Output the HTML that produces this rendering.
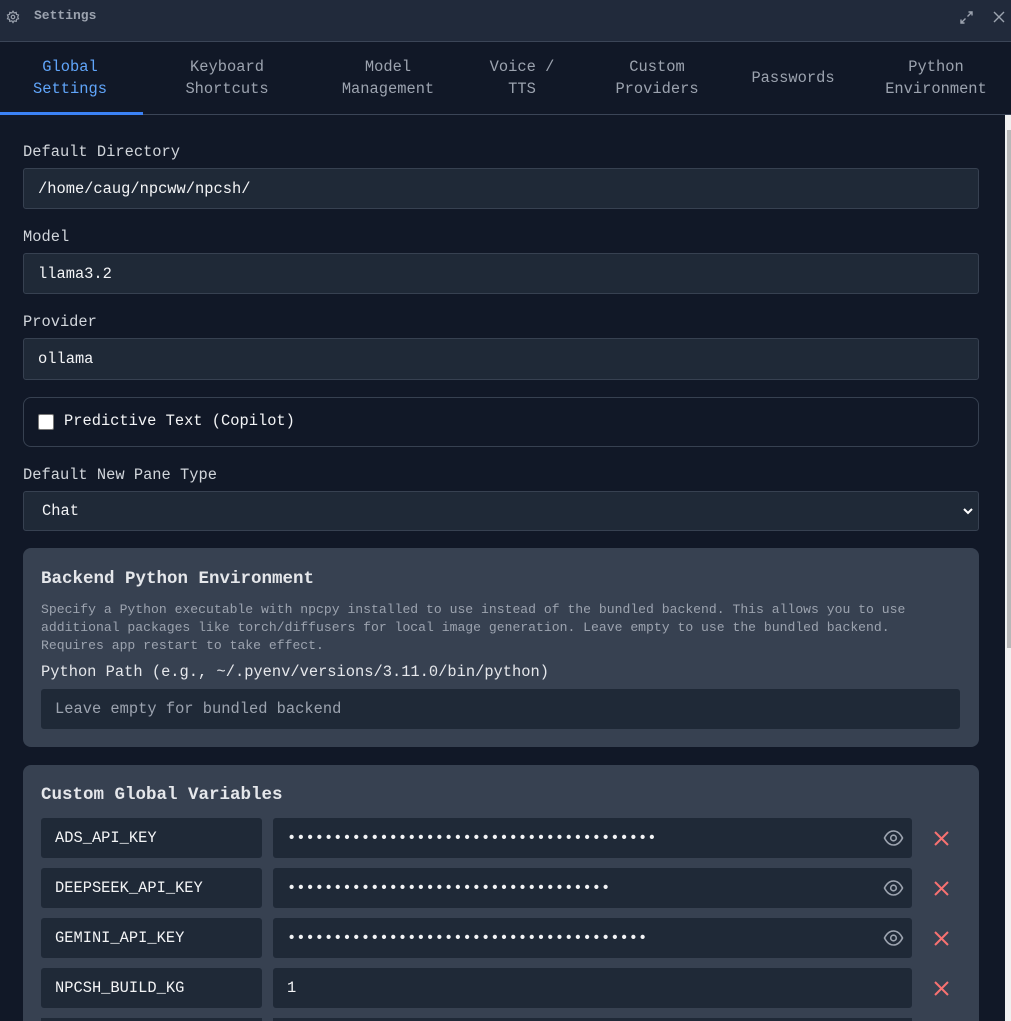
<!DOCTYPE html>
<html style="overflow:hidden;width:1011px;height:1021px"><head><style>
*{box-sizing:border-box;margin:0;padding:0}
body{width:1011px;height:1021px;overflow:hidden;background:#111827;font-family:"Liberation Mono",monospace;color:#e5e7eb;position:relative}
.a{position:absolute}
.tb{left:0;top:0;width:1011px;height:42px;background:#212a3b;border-bottom:1px solid #3b4557}
.tabs{left:0;top:42px;width:1011px;height:73px;border-bottom:1px solid #3b4557}
.tab{position:absolute;top:0;height:72px;display:flex;align-items:center;justify-content:center;text-align:center;font-size:15.4px;line-height:22px;color:#9ca3af}
.lbl{font-size:15.4px;color:#d1d5db}
.inp{background:#1f2937;border:1px solid #374151;border-radius:3px;font-size:15.4px;color:#f3f4f6;padding-left:14px;display:flex;align-items:center}
.panel{background:#374151;border-radius:8px}
.kin{background:#1f2937;border-radius:3px;font-size:15.4px;color:#f3f4f6;padding-left:14px;display:flex;align-items:center;height:40px}
</style></head><body>
<div class="a tb">
<svg class="a" style="left:6px;top:10px" width="14" height="14" viewBox="0 0 24 24" fill="none" stroke="#9ca3af" stroke-width="2"><circle cx="12" cy="12" r="3"/><path d="M12 2l2 3 3.5-1 .5 3.5 3.5 1-1.5 3.5 1.5 3-3.5 1-.5 3.5-3.5-1-2 3-2-3-3.5 1-.5-3.5-3.5-1 1.5-3-1.5-3.5 3.5-1 .5-3.5 3.5 1z"/></svg>
<div class="a" style="left:34px;top:8px;font-size:13px;font-weight:bold;color:#9ca3af">Settings</div>
<svg class="a" style="left:959px;top:10px" width="15" height="15" viewBox="0 0 15 15" stroke="#9ca3af" stroke-width="1.4" fill="none"><path d="M8.5 6.5L13 2M9.5 2H13V5.5M6.5 8.5L2 13M2 9.5V13H5.5"/></svg>
<svg class="a" style="left:993px;top:11px" width="12" height="12" viewBox="0 0 12 12" stroke="#9ca3af" stroke-width="1.4"><path d="M1 1L11 11M11 1L1 11"/></svg>
</div>
<div class="a tabs">
<div class="tab" style="left:0;width:140px;color:#60a5fa">Global<br>Settings</div>
<div class="a" style="left:0;top:70px;width:143px;height:3px;background:#3b82f6"></div>
<div class="tab" style="left:160px;width:134px">Keyboard<br>Shortcuts</div>
<div class="tab" style="left:330px;width:116px">Model<br>Management</div>
<div class="tab" style="left:478px;width:88px">Voice /<br>TTS</div>
<div class="tab" style="left:604px;width:106px">Custom<br>Providers</div>
<div class="tab" style="left:740px;width:106px">Passwords</div>
<div class="tab" style="left:876px;width:120px">Python<br>Environment</div>
</div>

<div class="a lbl" style="left:23px;top:143px">Default Directory</div>
<div class="a inp" style="left:23px;top:168px;width:956px;height:41px">/home/caug/npcww/npcsh/</div>
<div class="a lbl" style="left:23px;top:228px">Model</div>
<div class="a inp" style="left:23px;top:253px;width:956px;height:41px">llama3.2</div>
<div class="a lbl" style="left:23px;top:313px">Provider</div>
<div class="a inp" style="left:23px;top:338px;width:956px;height:42px">ollama</div>
<div class="a" style="left:23px;top:397px;width:956px;height:50px;border:1px solid #374151;border-radius:8px"></div>
<div class="a" style="left:38px;top:414px;width:16px;height:16px;background:#fff;border:1px solid #777;border-radius:2px"></div>
<div class="a lbl" style="left:64px;top:412px;color:#f3f4f6">Predictive Text (Copilot)</div>
<div class="a lbl" style="left:23px;top:466px">Default New Pane Type</div>
<div class="a inp" style="left:23px;top:491px;width:956px;height:40px;padding-left:18px">Chat</div>
<svg class="a" style="left:962px;top:506px" width="12" height="10" viewBox="0 0 12 10"><path d="M2 3l4 4 4-4" stroke="#fff" stroke-width="2" fill="none"/></svg>

<div class="a panel" style="left:23px;top:548px;width:956px;height:199px"></div>
<div class="a" style="left:41px;top:569px;font-size:17.5px;font-weight:bold;color:#e5e7eb">Backend Python Environment</div>
<div class="a" style="left:41px;top:601px;width:910px;font-size:13.1px;line-height:18px;color:#9ca3af">Specify a Python executable with npcpy installed to use instead of the bundled backend. This allows you to use additional packages like torch/diffusers for local image generation. Leave empty to use the bundled backend. Requires app restart to take effect.</div>
<div class="a lbl" style="left:41px;top:663px;color:#e5e7eb">Python Path (e.g., ~/.pyenv/versions/3.11.0/bin/python)</div>
<div class="a kin" style="left:41px;top:689px;width:919px;color:#9ca3af">Leave empty for bundled backend</div>

<div class="a panel" style="left:23px;top:765px;width:956px;height:270px"></div>
<div class="a" style="left:41px;top:785px;font-size:17.5px;font-weight:bold;color:#e5e7eb">Custom Global Variables</div>

<div class="a kin" style="left:41px;top:818px;width:221px">ADS_API_KEY</div>
<div class="a kin" style="left:273px;top:818px;width:639px">••••••••••••••••••••••••••••••••••••••••</div>
<div class="a kin" style="left:41px;top:868px;width:221px">DEEPSEEK_API_KEY</div>
<div class="a kin" style="left:273px;top:868px;width:639px">•••••••••••••••••••••••••••••••••••</div>
<div class="a kin" style="left:41px;top:918px;width:221px">GEMINI_API_KEY</div>
<div class="a kin" style="left:273px;top:918px;width:639px">•••••••••••••••••••••••••••••••••••••••</div>
<div class="a kin" style="left:41px;top:968px;width:221px">NPCSH_BUILD_KG</div>
<div class="a kin" style="left:273px;top:968px;width:639px">1</div>
<div class="a" style="left:41px;top:1018px;width:221px;height:3px;background:#1f2937"></div>
<div class="a" style="left:273px;top:1018px;width:639px;height:3px;background:#1f2937"></div>

<svg class="a" style="left:883px;top:828px" width="21" height="120" viewBox="0 0 21 120" fill="none" stroke="#9ca3af" stroke-width="1.6">
<path d="M1.5 10C4 5 7 3 10.5 3S17 5 19.5 10C17 15 14 17 10.5 17S4 15 1.5 10Z"/><circle cx="10.5" cy="10" r="2.8"/>
<g transform="translate(0,50)"><path d="M1.5 10C4 5 7 3 10.5 3S17 5 19.5 10C17 15 14 17 10.5 17S4 15 1.5 10Z"/><circle cx="10.5" cy="10" r="2.8"/></g>
<g transform="translate(0,100)"><path d="M1.5 10C4 5 7 3 10.5 3S17 5 19.5 10C17 15 14 17 10.5 17S4 15 1.5 10Z"/><circle cx="10.5" cy="10" r="2.8"/></g>
</svg>
<svg class="a" style="left:934px;top:831px" width="15" height="165" viewBox="0 0 15 165" stroke="#f87171" stroke-width="2">
<path d="M1 1L14 14M14 1L1 14M1 51L14 64M14 51L1 64M1 101L14 114M14 101L1 114M1 151L14 164M14 151L1 164"/>
</svg>
<div class="a" style="left:1005px;top:115px;width:6px;height:906px;background:#f0f0f0"></div>
<div class="a" style="left:1007px;top:130px;width:4px;height:518px;background:#b8b8b8"></div>
</body></html>
